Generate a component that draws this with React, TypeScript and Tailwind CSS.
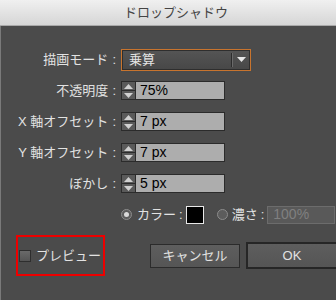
import React from 'react';

const jp = { fontFamily: '"Liberation Sans", "Noto Sans CJK JP", sans-serif' };

const Spinner = () => (
  <div className="flex h-[19px] w-[15px] shrink-0 flex-col border border-[#2b2b2b] bg-[#5a5a5a]">
    <div className="flex flex-1 items-center justify-center border-b border-[#2b2b2b]">
      <svg width="9" height="5" viewBox="0 0 9 5">
        <path d="M4.5 0 L9 5 L0 5 Z" fill="#d0d0d0" />
      </svg>
    </div>
    <div className="flex flex-1 items-center justify-center">
      <svg width="9" height="5" viewBox="0 0 9 5">
        <path d="M0 0 L9 0 L4.5 5 Z" fill="#d0d0d0" />
      </svg>
    </div>
  </div>
);

interface IRowProps {
  label: string;
  children: React.ReactNode;
}

const Row: React.FC<IRowProps> = ({ label, children }) => (
  <div className="flex h-[31px] items-center">
    <div className="w-[118px] shrink-0 whitespace-nowrap pr-[3px] text-right text-[13px] text-[#e2e2e2]">
      {label}
      <span className="ml-[4px]">:</span>
    </div>
    <div className="ml-[2px] flex items-center">{children}</div>
  </div>
);

const NumberField = ({ value }: { value: string }) => (
  <div className="flex items-center">
    <Spinner />
    <div className="flex h-[19px] w-[89px] items-center border border-l-0 border-[#2b2b2b] bg-[#adadad] pl-[4px] text-[14px] text-black">
      {value}
    </div>
  </div>
);

const Radio = ({ checked }: { checked: boolean }) => (
  <div className="flex h-[11px] w-[11px] shrink-0 items-center justify-center rounded-full border border-[#8c8c8c] bg-[#5c5c5c]">
    {checked && <div className="h-[5px] w-[5px] rounded-full bg-[#dadada]" />}
  </div>
);

export default function App() {
  return (
    <div className="h-[300px] w-[336px] overflow-hidden bg-[#4b4b4b]" style={jp}>
      <div className="flex h-[26px] items-center justify-center border-b border-[#a9a9a9] bg-gradient-to-b from-[#f0f0f0] to-[#d6d6d6] pl-[16px] text-[13px] text-[#444]">
        ドロップシャドウ
      </div>

      <div className="h-[274px] border-l border-[#7a7a7a] pt-[18px]">
        <Row label="描画モード">
          <div className="flex h-[22px] w-[130px] items-center border border-[#c8742e] bg-gradient-to-b from-[#555] to-[#474747] shadow-[inset_0_0_0_1px_#2e2e2e]">
            <span className="flex-1 pl-[7px] text-[13px] text-[#e4e4e4]">乗算</span>
            <div className="h-[14px] w-px bg-[#2c2c2c]" />
            <div className="h-[14px] w-px bg-[#6a6a6a]" />
            <div className="flex w-[17px] justify-center">
              <svg width="9" height="5" viewBox="0 0 9 5">
                <path d="M0 0 L9 0 L4.5 5 Z" fill="#e6e6e6" />
              </svg>
            </div>
          </div>
        </Row>
        <Row label="不透明度">
          <NumberField value="75%" />
        </Row>
        <Row label="X 軸オフセット">
          <NumberField value="7 px" />
        </Row>
        <Row label="Y 軸オフセット">
          <NumberField value="7 px" />
        </Row>
        <Row label="ぼかし">
          <NumberField value="5 px" />
        </Row>

        <div className="flex h-[31px] items-center whitespace-nowrap pl-[120px] text-[13px] text-[#e2e2e2]">
          <Radio checked />
          <span className="ml-[5px] shrink-0">カラー</span>
          <span className="ml-[3px] shrink-0">:</span>
          <div className="ml-[3px] h-[18px] w-[18px] shrink-0 border border-[#e8e8e8] bg-black" />
          <div className="ml-[13px] shrink-0">
            <Radio checked={false} />
          </div>
          <span className="ml-[4px] shrink-0">濃さ</span>
          <span className="ml-[3px] shrink-0">:</span>
          <div className="ml-[3px] flex h-[18px] w-[68px] shrink-0 items-center border border-[#6c6c6c] bg-[#595959] pl-[5px] text-[14px] text-[#808080]">
            100%
          </div>
        </div>

        <div className="mt-[5px] flex items-center">
          <div className="ml-[15px] flex h-[41px] w-[89px] shrink-0 items-center border-2 border-[#ee0000] pl-[1px]">
            <div className="h-[12px] w-[12px] border border-[#2e2e2e] bg-gradient-to-b from-[#6a6a6a] to-[#555]" />
            <span className="ml-[5px] whitespace-nowrap text-[13px] text-[#e2e2e2]">プレビュー</span>
          </div>
          <div className="ml-[45px] flex h-[24px] w-[90px] shrink-0 items-center justify-center border border-[#2b2b2b] bg-gradient-to-b from-[#5e5e5e] to-[#555] text-[13px] text-[#e2e2e2]">
            キャンセル
          </div>
          <div className="ml-[6px] flex h-[27px] w-[92px] shrink-0 items-center justify-center border-2 border-[#262626] bg-gradient-to-b from-[#5e5e5e] to-[#555] text-[13px] text-[#e2e2e2]">
            OK
          </div>
        </div>
      </div>
    </div>
  );
}
